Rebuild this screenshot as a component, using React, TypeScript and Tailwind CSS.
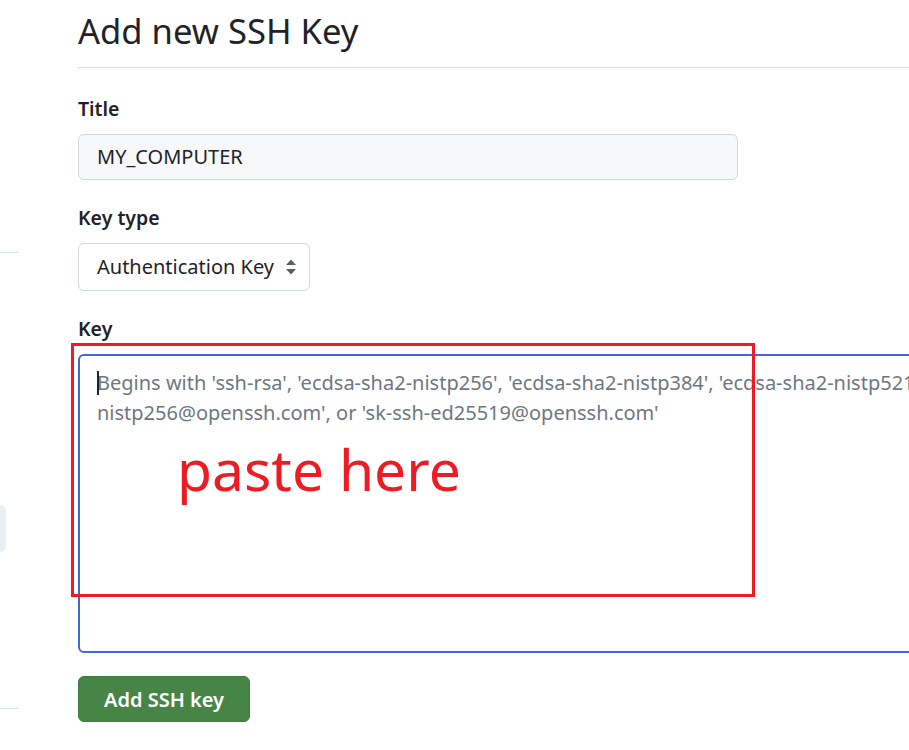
import React from 'react';

const font = { fontFamily: '"Noto Sans", "Open Sans", sans-serif' };

function SortArrows() {
  return (
    <svg width="12" height="18" viewBox="0 0 12 18" fill="#57606a">
      <path d="M6 1.5 L11 7 H1 Z" />
      <path d="M6 16.5 L11 11 H1 Z" />
    </svg>
  );
}

export default function App() {
  return (
    <div
      className="relative flex w-[909px] h-[750px] overflow-hidden bg-white text-[#1f2328]"
      style={font}
    >
      {/* sidebar edge, mostly cut off */}
      <div className="flex-none w-[18px] flex flex-col">
        <div className="mt-[252px] h-px bg-[#d8dee4]" />
        <div className="mt-[252px] h-[47px] w-[6px] rounded-r-[6px] bg-[#eaeef2]" />
        <div className="mt-[156px] h-px bg-[#d8dee4]" />
      </div>

      <div className="relative flex-none ml-[60px] w-[900px]">
        <div className="h-[68px] border-b border-[#d8dee4]">
          <h1 className="pt-[7px] text-[34.6px] leading-[48px] font-normal">Add new SSH Key</h1>
        </div>

        <div className="mt-[27px] text-[19.5px] leading-[28px] font-semibold">Title</div>
        <div className="mt-[11px] w-[660px] h-[46px] flex items-center px-[18px] rounded-[6px] border border-[#d0d7de] bg-[#f6f8fa] text-[20px]">
          MY_COMPUTER
        </div>

        <div className="mt-[24px] text-[19.5px] leading-[28px] font-semibold">Key type</div>
        <div className="mt-[11px] w-[232px] h-[48px] flex items-center justify-between pl-[18px] pr-[12px] rounded-[6px] border border-[#d0d7de] bg-white text-[20px]">
          <span>Authentication Key</span>
          <SortArrows />
        </div>

        <div className="mt-[24px] text-[19.5px] leading-[28px] font-semibold">Key</div>
        <div className="mt-[11px] w-[860px] h-[299px] rounded-[6px] border-2 border-[#3d69d6] bg-white pl-[17px] pt-[12px] pr-[20px] overflow-hidden">
          <div className="relative text-[20px] leading-[30px] text-[#6e7781] whitespace-nowrap">
            <span className="absolute left-0 top-[3px] w-[2px] h-[24px] bg-[#1f2328]" />
            <div>Begins with 'ssh-rsa', 'ecdsa-sha2-nistp256', 'ecdsa-sha2-nistp384', 'ecdsa-sha2-nistp521', 'sk-ecdsa-sha2-</div>
            <div>nistp256@openssh.com', or 'sk-ssh-ed25519@openssh.com'</div>
          </div>
        </div>

        <button className="mt-[23px] w-[172px] h-[46px] pt-[2px] rounded-[6px] bg-[#478547] border border-[#3f7a40] text-white text-[20px] font-semibold">
          Add SSH key
        </button>

        {/* annotation over the key box */}
        <div className="absolute left-[-7px] top-[343px] w-[684px] h-[254px] border-[3px] border-[#ed1c24]">
          <div className="absolute left-[103px] top-[88px] text-[57px] leading-[70px] text-[#ed1c24]">
            paste here
          </div>
        </div>
      </div>
    </div>
  );
}
